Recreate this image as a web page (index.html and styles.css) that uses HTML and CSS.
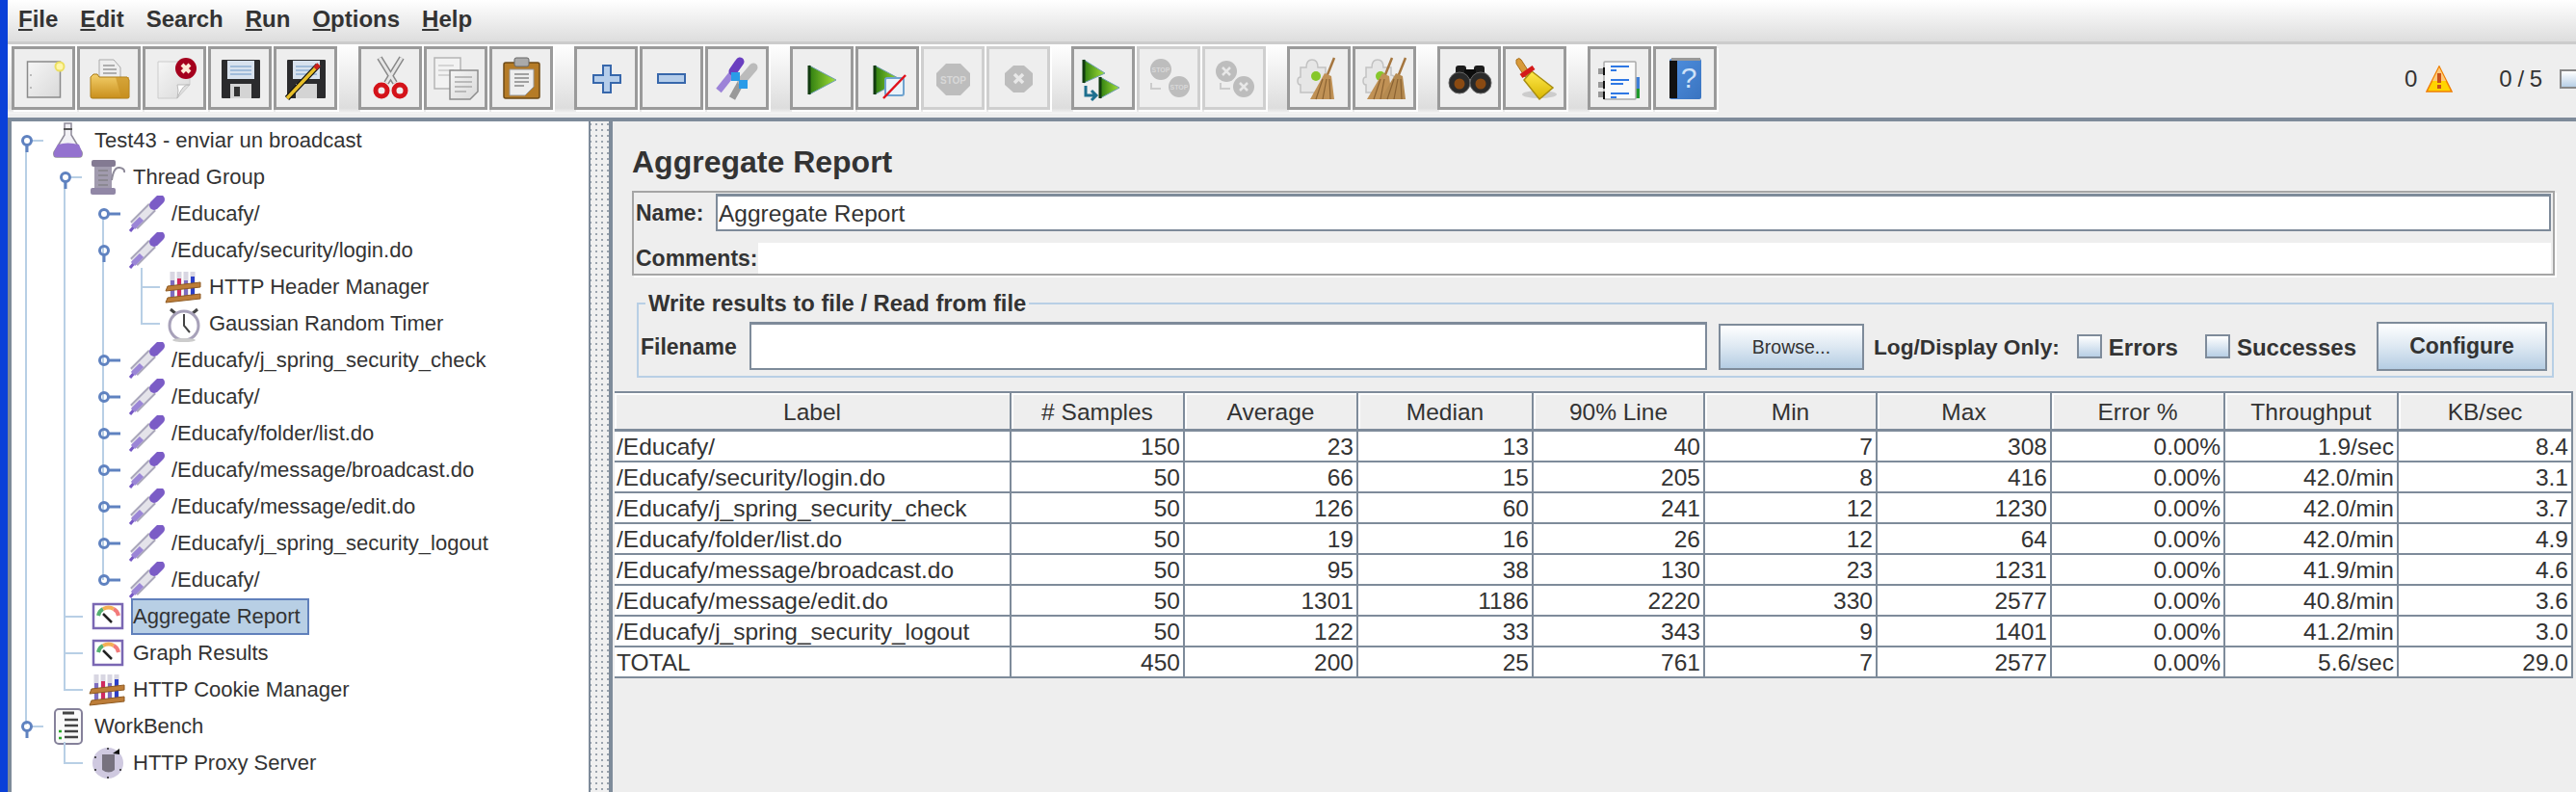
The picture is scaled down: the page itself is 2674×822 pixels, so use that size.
FILE: index.html
```html
<!DOCTYPE html>
<html lang="en">

<head>
    <meta charset="UTF-8">
    <title>Apache JMeter - Aggregate Report</title>
    <link rel="stylesheet" href="styles.css">
</head>

<body>
    <div class="window">
        <div class="menubar">
            <span><u>F</u>ile</span>
            <span><u>E</u>dit</span>
            <span>Search</span>
            <span><u>R</u>un</span>
            <span><u>O</u>ptions</span>
            <span><u>H</u>elp</span>
        </div>

        <div class="toolbar">
            <div class="tools">
                <div class="group">
                    <div class="btn"><svg class="bicon"><use href="#i-new" /></svg></div>
                    <div class="btn"><svg class="bicon"><use href="#i-open" /></svg></div>
                    <div class="btn"><svg class="bicon"><use href="#i-close" /></svg></div>
                    <div class="btn"><svg class="bicon"><use href="#i-save" /></svg></div>
                    <div class="btn"><svg class="bicon"><use href="#i-saveas" /></svg></div>
                </div>
                <div class="group">
                    <div class="btn"><svg class="bicon"><use href="#i-cut" /></svg></div>
                    <div class="btn"><svg class="bicon"><use href="#i-copy" /></svg></div>
                    <div class="btn"><svg class="bicon"><use href="#i-paste" /></svg></div>
                </div>
                <div class="group">
                    <div class="btn"><svg class="bicon"><use href="#i-plus" /></svg></div>
                    <div class="btn"><svg class="bicon"><use href="#i-minus" /></svg></div>
                    <div class="btn"><svg class="bicon"><use href="#i-toggle" /></svg></div>
                </div>
                <div class="group">
                    <div class="btn"><svg class="bicon"><use href="#i-play" /></svg></div>
                    <div class="btn"><svg class="bicon"><use href="#i-playnt" /></svg></div>
                    <div class="btn off">
                        <svg class="bicon" viewBox="3 3 60 60">
                            <path d="M26 18h15l10 10v13L41 51H26L16 41V28z" fill="#bdbdbd" />
                            <text x="33.5" y="39" class="stoptext">STOP</text>
                        </svg>
                    </div>
                    <div class="btn off"><svg class="bicon"><use href="#i-shut" /></svg></div>
                </div>
                <div class="group">
                    <div class="btn"><svg class="bicon"><use href="#i-rstart" /></svg></div>
                    <div class="btn off">
                        <svg class="bicon" viewBox="3 3 60 60">
                            <circle cx="25" cy="24" r="11" fill="#bdbdbd" />
                            <circle cx="44" cy="42" r="11" fill="#bdbdbd" />
                            <text x="25" y="27" class="stoptext small">STOP</text>
                            <text x="44" y="45" class="stoptext small">STOP</text>
                            <path d="M15 38v6h10" fill="none" stroke="#ccc" stroke-width="2" />
                        </svg>
                    </div>
                    <div class="btn off"><svg class="bicon"><use href="#i-rshut" /></svg></div>
                </div>
                <div class="group">
                    <div class="btn"><svg class="bicon"><use href="#i-clear" /></svg></div>
                    <div class="btn"><svg class="bicon"><use href="#i-clearall" /></svg></div>
                </div>
                <div class="group">
                    <div class="btn"><svg class="bicon"><use href="#i-search" /></svg></div>
                    <div class="btn"><svg class="bicon"><use href="#i-broom" /></svg></div>
                </div>
                <div class="group">
                    <div class="btn"><svg class="bicon"><use href="#i-log" /></svg></div>
                    <div class="btn">
                        <svg class="bicon" viewBox="3 3 60 60">
                            <rect x="17" y="13" width="33" height="42" rx="2" fill="url(#g-book)" />
                            <rect x="17" y="15" width="8" height="39" fill="#111" />
                            <rect x="19" y="12" width="30" height="3" fill="#999" />
                            <text x="37" y="43" class="helptext">?</text>
                        </svg>
                    </div>
                </div>
            </div>
            <div class="status">
                <span class="count">0</span>
                <svg class="warn" viewBox="0 0 28 28">
                    <path d="M14 1 27 27H1z" fill="#ffd400" stroke="#ef7d00" stroke-width="1.5" />
                    <path d="M14 2 21 16H7z" fill="#ffc97a" />
                    <rect x="12" y="8" width="4" height="10" fill="#c8501a" />
                    <rect x="12" y="20" width="4" height="4" fill="#c8501a" />
                </svg>
                <span class="threads">0 / 5</span>
                <span class="check runbox"></span>
            </div>
        </div>

        <div class="main">
            <div class="tree">
                <svg class="guides" viewBox="12 126 600 696">
                    <g class="guide">
                        <path d="M27 150V752M33 146H45M67 188V716H86M107 226V602M147 278V336H166M147 298H166M67 640H86M67 678H86M33 754H45M67 770V792H86M73 184H85" />
                    </g>
                    <g class="handle">
                        <circle cx="28" cy="146" r="4.5" /><path d="M28 151V158" />
                        <circle cx="68" cy="184" r="4.5" /><path d="M68 189V196" />
                        <circle cx="108" cy="222" r="4.5" /><path d="M113 222H125" />
                        <circle cx="108" cy="260" r="4.5" /><path d="M108 265V272" />
                        <circle cx="108" cy="374" r="4.5" /><path d="M113 374H125" />
                        <circle cx="108" cy="412" r="4.5" /><path d="M113 412H125" />
                        <circle cx="108" cy="450" r="4.5" /><path d="M113 450H125" />
                        <circle cx="108" cy="488" r="4.5" /><path d="M113 488H125" />
                        <circle cx="108" cy="526" r="4.5" /><path d="M113 526H125" />
                        <circle cx="108" cy="564" r="4.5" /><path d="M113 564H125" />
                        <circle cx="108" cy="602" r="4.5" /><path d="M113 602H125" />
                        <circle cx="28" cy="754" r="4.5" /><path d="M28 759V766" />
                    </g>
                </svg>
                <div class="row lv0"><svg class="ticon"><use href="#t-flask" /></svg><span class="name">Test43 - enviar un broadcast</span></div>
                <div class="row lv1"><svg class="ticon"><use href="#t-spool" /></svg><span class="name">Thread Group</span></div>
                <div class="row lv2"><svg class="ticon"><use href="#t-pipette" /></svg><span class="name">/Educafy/</span></div>
                <div class="row lv2"><svg class="ticon"><use href="#t-pipette" /></svg><span class="name">/Educafy/security/login.do</span></div>
                <div class="row lv3"><svg class="ticon"><use href="#t-rack" /></svg><span class="name">HTTP Header Manager</span></div>
                <div class="row lv3"><svg class="ticon"><use href="#t-timer" /></svg><span class="name">Gaussian Random Timer</span></div>
                <div class="row lv2"><svg class="ticon"><use href="#t-pipette" /></svg><span class="name">/Educafy/j_spring_security_check</span></div>
                <div class="row lv2"><svg class="ticon"><use href="#t-pipette" /></svg><span class="name">/Educafy/</span></div>
                <div class="row lv2"><svg class="ticon"><use href="#t-pipette" /></svg><span class="name">/Educafy/folder/list.do</span></div>
                <div class="row lv2"><svg class="ticon"><use href="#t-pipette" /></svg><span class="name">/Educafy/message/broadcast.do</span></div>
                <div class="row lv2"><svg class="ticon"><use href="#t-pipette" /></svg><span class="name">/Educafy/message/edit.do</span></div>
                <div class="row lv2"><svg class="ticon"><use href="#t-pipette" /></svg><span class="name">/Educafy/j_spring_security_logout</span></div>
                <div class="row lv2"><svg class="ticon"><use href="#t-pipette" /></svg><span class="name">/Educafy/</span></div>
                <div class="row lv1"><svg class="ticon"><use href="#t-gauge" /></svg><span class="name selected">Aggregate Report</span></div>
                <div class="row lv1"><svg class="ticon"><use href="#t-gauge" /></svg><span class="name">Graph Results</span></div>
                <div class="row lv1"><svg class="ticon"><use href="#t-rack" /></svg><span class="name">HTTP Cookie Manager</span></div>
                <div class="row lv0"><svg class="ticon"><use href="#t-clipboard" /></svg><span class="name">WorkBench</span></div>
                <div class="row lv1"><svg class="ticon"><use href="#t-proxy" /></svg><span class="name">HTTP Proxy Server</span></div>
            </div>

            <div class="splitter"></div>

            <div class="panel">
                <div class="title">Aggregate Report</div>

                <div class="namebox">
                    <div class="namerow">
                        <label class="namelabel">Name:</label>
                        <div class="field namefield">Aggregate Report</div>
                    </div>
                    <div class="commentrow">
                        <label>Comments:</label>
                        <div class="commentfield"></div>
                    </div>
                </div>

                <fieldset class="fileset">
                    <legend>Write results to file / Read from file</legend>
                    <div class="filerow">
                        <label class="filelabel">Filename</label>
                        <div class="field filefield"></div>
                        <div class="browse">Browse...</div>
                        <label class="loglabel">Log/Display Only:</label>
                        <span class="check errcheck"></span>
                        <label class="checklabel">Errors</label>
                        <span class="check succheck"></span>
                        <label class="checklabel">Successes</label>
                        <div class="configure">Configure</div>
                    </div>
                </fieldset>

                <table class="report">
                    <colgroup>
                        <col class="c-label"><col class="c180"><col class="c180"><col class="c182"><col class="c178">
                        <col class="c179"><col class="c181"><col class="c180"><col class="c180"><col class="c181">
                    </colgroup>
                    <thead>
                        <tr><th>Label</th><th># Samples</th><th>Average</th><th>Median</th><th>90% Line</th><th>Min</th><th>Max</th><th>Error %</th><th>Throughput</th><th>KB/sec</th></tr>
                    </thead>
                    <tbody>
                        <tr><td>/Educafy/</td><td>150</td><td>23</td><td>13</td><td>40</td><td>7</td><td>308</td><td>0.00%</td><td>1.9/sec</td><td>8.4</td></tr>
                        <tr><td>/Educafy/security/login.do</td><td>50</td><td>66</td><td>15</td><td>205</td><td>8</td><td>416</td><td>0.00%</td><td>42.0/min</td><td>3.1</td></tr>
                        <tr><td>/Educafy/j_spring_security_check</td><td>50</td><td>126</td><td>60</td><td>241</td><td>12</td><td>1230</td><td>0.00%</td><td>42.0/min</td><td>3.7</td></tr>
                        <tr><td>/Educafy/folder/list.do</td><td>50</td><td>19</td><td>16</td><td>26</td><td>12</td><td>64</td><td>0.00%</td><td>42.0/min</td><td>4.9</td></tr>
                        <tr><td>/Educafy/message/broadcast.do</td><td>50</td><td>95</td><td>38</td><td>130</td><td>23</td><td>1231</td><td>0.00%</td><td>41.9/min</td><td>4.6</td></tr>
                        <tr><td>/Educafy/message/edit.do</td><td>50</td><td>1301</td><td>1186</td><td>2220</td><td>330</td><td>2577</td><td>0.00%</td><td>40.8/min</td><td>3.6</td></tr>
                        <tr><td>/Educafy/j_spring_security_logout</td><td>50</td><td>122</td><td>33</td><td>343</td><td>9</td><td>1401</td><td>0.00%</td><td>41.2/min</td><td>3.0</td></tr>
                        <tr><td>TOTAL</td><td>450</td><td>200</td><td>25</td><td>761</td><td>7</td><td>2577</td><td>0.00%</td><td>5.6/sec</td><td>29.0</td></tr>
                    </tbody>
                </table>
            </div>
        </div>
    </div>

    <!-- icon sheet: toolbar icons use button coordinates, tree icons a 40x38 box -->
    <svg class="sheet">
        <defs>
            <linearGradient id="g-folder" x1="0" y1="0" x2="0" y2="1"><stop offset="0" stop-color="#f3cf6a" /><stop offset="1" stop-color="#c98f1c" /></linearGradient>
            <linearGradient id="g-green" x1="0" y1="0" x2="1" y2="0"><stop offset="0" stop-color="#2e7d10" /><stop offset="1" stop-color="#a6e23a" /></linearGradient>
            <linearGradient id="g-page" x1="0" y1="0" x2="1" y2="1"><stop offset="0" stop-color="#f6f6f6" /><stop offset="1" stop-color="#d9d9d9" /></linearGradient>
            <linearGradient id="g-broom" x1="0" y1="0" x2="0" y2="1"><stop offset="0" stop-color="#ffe94d" /><stop offset="1" stop-color="#d9b600" /></linearGradient>
            <linearGradient id="g-book" x1="0" y1="0" x2="1" y2="1"><stop offset="0" stop-color="#4f8fdf" /><stop offset="1" stop-color="#3a74c0" /></linearGradient>
        </defs>

        <symbol id="i-new" viewBox="3 3 60 60">
            <rect x="16.5" y="16" width="34" height="37" fill="url(#g-page)" stroke="#8a8a8a" stroke-width="1.5" />
            <circle cx="20" cy="30" r="1" fill="#aaa" /><circle cx="20" cy="43" r="1" fill="#aaa" />
            <circle cx="50" cy="21" r="4.5" fill="#fff6a8" stroke="#ecdf60" stroke-width="2" />
        </symbol>
        <symbol id="i-open" viewBox="3 3 60 60">
            <path d="M23 14h15l7 8v14H23z" fill="#eee" stroke="#aaa" />
            <path d="M27 20h12M27 24h14M27 28h14" stroke="#999" stroke-width="1.5" />
            <path d="M14 32l3-3 4 0 2 3h29l2 3v18q0 1-2 1H16q-2 0-2-2z" fill="url(#g-folder)" stroke="#a97a16" />
            <path d="M40 32h14v22H46z" fill="#c58d20" opacity=".6" />
        </symbol>
        <symbol id="i-close" viewBox="3 3 60 60">
            <path d="M16 16h33v24L36 54H16z" fill="url(#g-page)" stroke="#ccc" />
            <path d="M49 40q-7-2-13 14q2-9 0-14z" fill="#fff" stroke="#bbb" />
            <circle cx="45" cy="23" r="11" fill="#a5001d" />
            <path d="M41 19l8 8M49 19l-8 8" stroke="#ffe9d6" stroke-width="4" />
        </symbol>
        <symbol id="i-save" viewBox="3 3 60 60">
            <rect x="14" y="14" width="40" height="40" rx="1" fill="#2b2b2d" />
            <rect x="20" y="15" width="28" height="19" fill="#d8e2ee" />
            <path d="M23 21h22M23 25h22M23 29h22" stroke="#8fb0d3" stroke-width="1.5" />
            <rect x="23" y="39" width="22" height="15" fill="#d4d4d4" />
            <rect x="27" y="42" width="6" height="10" fill="#333" />
        </symbol>
        <symbol id="i-saveas" viewBox="3 3 60 60">
            <rect x="14" y="14" width="40" height="40" rx="1" fill="#2b2b2d" />
            <rect x="20" y="15" width="28" height="19" fill="#d8e2ee" />
            <path d="M23 21h22M23 25h22M23 29h22" stroke="#8fb0d3" stroke-width="1.5" />
            <rect x="23" y="39" width="22" height="15" fill="#d4d4d4" />
            <path d="M14 54 46 20" stroke="#111" stroke-width="6" />
            <path d="M14 54 46 20" stroke="#e8bf2a" stroke-width="3.5" />
            <path d="M43 23 47 19" stroke="#c9201c" stroke-width="5" />
        </symbol>
        <symbol id="i-cut" viewBox="3 3 60 60">
            <path d="M22 12 38 38M45 12 29 38" stroke="#888" stroke-width="6" />
            <path d="M22 12 38 38M45 12 29 38" stroke="#e6e6e6" stroke-width="3" />
            <circle cx="24" cy="46" r="6" fill="none" stroke="#d4131a" stroke-width="5" />
            <circle cx="43" cy="46" r="6" fill="none" stroke="#d4131a" stroke-width="5" />
        </symbol>
        <symbol id="i-copy" viewBox="3 3 60 60">
            <rect x="11" y="12" width="27" height="32" fill="#f2f2f2" stroke="#b5b5b5" stroke-width="1.5" />
            <path d="M15 20h16M15 25h16M15 30h16" stroke="#ccc" stroke-width="1.5" />
            <path d="M27 25h29v22l-8 8H27z" fill="url(#g-page)" stroke="#8c8c8c" stroke-width="1.5" />
            <path d="M32 32h18M32 37h18M32 42h18M32 47h12" stroke="#aaa" stroke-width="1.5" />
        </symbol>
        <symbol id="i-paste" viewBox="3 3 60 60">
            <rect x="15" y="17" width="37" height="37" rx="2" fill="#b57b26" stroke="#6d4a16" stroke-width="1.5" />
            <rect x="26" y="12" width="15" height="9" rx="2" fill="#aaa" stroke="#666" />
            <path d="M21 24h25v18l-9 9H21z" fill="#eee" stroke="#999" />
            <path d="M26 29h15M26 33h15M26 37h15M26 41h10" stroke="#888" stroke-width="1.5" />
        </symbol>
        <symbol id="i-plus" viewBox="3 3 60 60">
            <path d="M30 20h8v10h10v8H38v10h-8V38H20v-8h10z" fill="#b5cdea" stroke="#3767ab" stroke-width="2" />
        </symbol>
        <symbol id="i-minus" viewBox="3 3 60 60">
            <rect x="19" y="29" width="28" height="9" fill="#b5cdea" stroke="#3767ab" stroke-width="2" />
        </symbol>
        <symbol id="i-toggle" viewBox="3 3 60 60">
            <path d="M14 46 30 26" stroke="#9c83d8" stroke-width="7" />
            <path d="M29 26 36 16" stroke="#6a3fc0" stroke-width="9" stroke-linecap="round" />
            <path d="M28 54 38 36" stroke="#999" stroke-width="7" />
            <path d="M38 36 50 22" stroke="#bbb" stroke-width="9" stroke-linecap="round" />
            <path d="M27 32h9v9h-9zM35 40h9v9h-9z" fill="#2b9be8" transform="translate(0 -5)" />
        </symbol>
        <symbol id="i-play" viewBox="3 3 60 60">
            <path d="M20 20 48 35 20 50z" fill="url(#g-green)" stroke="#6f9fb0" />
            <path d="M20 20V50" stroke="#123b10" stroke-width="3" />
        </symbol>
        <symbol id="i-playnt" viewBox="3 3 60 60">
            <path d="M20 20 48 35 20 50z" fill="url(#g-green)" stroke="#6f9fb0" />
            <path d="M20 20V50" stroke="#123b10" stroke-width="3" />
            <rect x="31" y="33" width="19" height="18" rx="2" fill="#eaf3fa" stroke="#6fa3cf" stroke-width="2" />
            <path d="M29 54 52 30" stroke="#e0101a" stroke-width="2.5" />
        </symbol>
        <symbol id="i-shut" viewBox="3 3 60 60">
            <path d="M28 20h11l9 8v12l-9 8H28l-9-8V28z" fill="#bdbdbd" />
            <path d="M29 29l9 9M38 29l-9 9" stroke="#e8e8e8" stroke-width="3.5" />
        </symbol>
        <symbol id="i-rstart" viewBox="3 3 60 60">
            <path d="M13 14 35 28 13 38z" fill="url(#g-green)" stroke="#6f9fb0" />
            <path d="M13 14V38" stroke="#123b10" stroke-width="3" />
            <path d="M30 32 50 43 30 54z" fill="url(#g-green)" stroke="#6f9fb0" />
            <path d="M30 32V54" stroke="#123b10" stroke-width="3" />
            <path d="M15 41V51H25M21 46l5 5-5 5" fill="none" stroke="#1e6f8e" stroke-width="3" />
        </symbol>
        <symbol id="i-rshut" viewBox="3 3 60 60">
            <circle cx="25" cy="26" r="11" fill="#bdbdbd" />
            <circle cx="43" cy="42" r="11" fill="#bdbdbd" />
            <path d="M21 22l8 8M29 22l-8 8M39 38l8 8M47 38l-8 8" stroke="#e8e8e8" stroke-width="2.5" />
            <path d="M19 38v6h10" fill="none" stroke="#ccc" stroke-width="2" />
        </symbol>
        <symbol id="i-clear" viewBox="3 3 60 60">
            <path d="M14 22h6q0-8 6-8t6 8h8v8q4 0 4 6t-4 6v6H14v-8q-3 0-3-4t3-4z" fill="#e6e6e6" stroke="#c2c2c2" stroke-width="1.5" />
            <circle cx="30" cy="31" r="5" fill="#86c72a" />
            <path d="M49 12 41 32" stroke="#a5763f" stroke-width="2.5" />
            <path d="M39 28l7 3 3 24H24z" fill="#c09155" />
            <path d="M37 34l-7 21M41 34l-4 21M44 34l1 21" stroke="#8a6232" stroke-width="1.2" />
        </symbol>
        <symbol id="i-clearall" viewBox="3 3 60 60">
            <path d="M14 22h6q0-8 6-8t6 8h8v8q4 0 4 6t-4 6v6H14v-8q-3 0-3-4t3-4z" fill="#e6e6e6" stroke="#c2c2c2" stroke-width="1.5" />
            <circle cx="29" cy="31" r="5" fill="#86c72a" />
            <path d="M41 12 33 32M55 12 47 32" stroke="#a5763f" stroke-width="2.5" />
            <path d="M31 28l7 3 3 24H15z" fill="#c09155" />
            <path d="M45 28l7 3 3 24H29z" fill="#b58a50" />
            <path d="M29 34l-7 21M33 34l-4 21M43 34l-7 21M47 34l-4 21M50 34l1 21" stroke="#8a6232" stroke-width="1.2" />
        </symbol>
        <symbol id="i-search" viewBox="3 3 60 60">
            <rect x="19" y="20" width="11" height="16" rx="3" fill="#1c1c1c" />
            <rect x="38" y="20" width="11" height="16" rx="3" fill="#1c1c1c" />
            <rect x="28" y="24" width="12" height="10" fill="#0c0c0c" />
            <circle cx="23" cy="38" r="11" fill="#2a2a2a" stroke="#666" />
            <circle cx="45" cy="38" r="11" fill="#2a2a2a" stroke="#666" />
            <circle cx="23" cy="39" r="5.5" fill="#8a4a12" /><circle cx="45" cy="39" r="5.5" fill="#8a4a12" />
        </symbol>
        <symbol id="i-broom" viewBox="3 3 60 60">
            <ellipse cx="38" cy="50" rx="18" ry="4" fill="#ccc" />
            <path d="M14 14q3-3 5 0l9 14-5 4-9-14z" fill="#d89a3a" stroke="#a86e1a" />
            <path d="M30 26 52 43 38 55 22 35z" fill="url(#g-broom)" stroke="#a98e10" stroke-width="1.5" />
            <path d="M19 31 32 22" stroke="#d41a1a" stroke-width="5" />
        </symbol>
        <symbol id="i-log" viewBox="3 3 60 60">
            <rect x="48" y="32" width="6" height="12" fill="#3f7fd8" /><rect x="48" y="44" width="6" height="10" fill="#1f9a2a" />
            <rect x="17" y="16" width="33" height="39" rx="1" fill="#fafafa" stroke="#aaa" stroke-width="1.5" />
            <path d="M11 24h7v6h-7zM11 38h7v6h-7zM11 48h7v6h-7z" fill="#999" transform="translate(0 -1)" />
            <path d="M17 22v8M17 36v8M17 47v8" stroke="#111" stroke-width="2" />
            <path d="M24 23h19M24 27h6M24 37h19M24 41h13M24 51h19M24 55h6" stroke="#2f78e4" stroke-width="2" transform="translate(0 -2)" />
        </symbol>

        <symbol id="t-flask" viewBox="0 0 40 38">
            <path d="M15 1h7v12l11 18q1 5-3 5H7q-4 0-3-5l11-18z" fill="#f2f1f6" stroke="#8e8a99" stroke-width="1.5" />
            <path d="M8 23q10-3 22 0l3 8q1 5-3 5H7q-4 0-3-5z" fill="#9472cf" />
            <path d="M14 7h9" stroke="#555" stroke-width="2" />
        </symbol>
        <symbol id="t-spool" viewBox="0 0 40 38">
            <rect x="6" y="8" width="18" height="22" fill="#a19bae" />
            <path d="M10 12h10M10 17h10M10 22h10M10 27h10" stroke="#777" />
            <rect x="3" y="1" width="25" height="7" rx="2" fill="#837a92" />
            <rect x="2" y="30" width="26" height="7" rx="2" fill="#9187a6" />
            <path d="M24 22q2-14 8-13t5 5" fill="none" stroke="#8e8a99" stroke-width="2" />
        </symbol>
        <symbol id="t-pipette" viewBox="0 0 40 38">
            <path d="M3 37 14 24" stroke="#7557c4" stroke-width="3" />
            <path d="M7 31 26 12" stroke="#a9a6ba" stroke-width="11" />
            <path d="M7 31 26 12" stroke="#e4e3ea" stroke-width="7" />
            <path d="M6 33 15 24" stroke="#9b86d6" stroke-width="6" />
            <path d="M28 10 34 4" stroke="#7b5cc6" stroke-width="10" stroke-linecap="round" />
        </symbol>
        <symbol id="t-rack" viewBox="0 0 40 38">
            <path d="M8 3V29M15 3V29M22 3V29M29 3V29" stroke="#d8d6e2" stroke-width="5" />
            <path d="M8 12V29" stroke="#7d6cc0" stroke-width="4" />
            <path d="M15 10V29" stroke="#d02a60" stroke-width="4" />
            <path d="M22 12V29" stroke="#7d6cc0" stroke-width="4" />
            <path d="M29 8V29" stroke="#2c3fc8" stroke-width="4" />
            <path d="M3 18 37 14v5L1 23zM3 30 37 26v5L1 35z" fill="#bd7d38" stroke="#8e5a22" />
        </symbol>
        <symbol id="t-timer" viewBox="0 0 40 38">
            <path d="M6 4 12 9M34 4 28 9" stroke="#444" stroke-width="3" />
            <circle cx="20" cy="21" r="15" fill="#fff" stroke="#a7a1b9" stroke-width="3" />
            <path d="M20 9V21L26 28" fill="none" stroke="#444" stroke-width="2" />
            <ellipse cx="20" cy="36" rx="12" ry="2" fill="#ccc" />
        </symbol>
        <symbol id="t-gauge" viewBox="0 0 40 38">
            <rect x="5" y="6" width="30" height="25" fill="#fff" stroke="#7a67b3" stroke-width="2.5" />
            <path d="M10 18q1-5 5-7" fill="none" stroke="#55b070" stroke-width="4" />
            <path d="M15 11q6-3 11 0" fill="none" stroke="#f5b055" stroke-width="4" />
            <path d="M26 11q4 2 5 7" fill="none" stroke="#f27a7a" stroke-width="4" />
            <path d="M15 16 24 25" stroke="#222" stroke-width="2.5" />
        </symbol>
        <symbol id="t-clipboard" viewBox="0 0 40 38">
            <rect x="5" y="1" width="28" height="36" rx="4" fill="#fafafa" stroke="#85819a" stroke-width="2" />
            <path d="M13 5h12" stroke="#444" stroke-width="3" />
            <path d="M15 12h14M15 18h14M15 24h14M15 30h14" stroke="#444" stroke-width="2.5" />
            <path d="M9 24h3M9 31h3" stroke="#27a827" stroke-width="2.5" />
        </symbol>
        <symbol id="t-proxy" viewBox="0 0 40 38">
            <circle cx="20" cy="19" r="16" fill="#cfc9e0" />
            <path d="M14 10h13v16q-6 5-13 0z" fill="#77727f" />
            <path d="M25 9 32 4v6z" fill="#111" />
            <circle cx="20" cy="4" r="1" fill="#222" /><circle cx="7" cy="13" r="1" fill="#222" /><circle cx="7" cy="26" r="1" fill="#222" /><circle cx="20" cy="34" r="1" fill="#222" /><circle cx="33" cy="26" r="1" fill="#222" />
        </symbol>
    </svg>
</body>

</html>
```

FILE: styles.css
```css
* {
    box-sizing: border-box;
}

body {
    margin: 0;
    font-family: "Liberation Sans", Arial, sans-serif;
    color: #333;
    overflow: hidden;
}

.window {
    display: flex;
    flex-direction: column;
    height: 822px;
    border-left: 8px solid #0a40d8;
    background-color: #eee;
}

.sheet {
    display: block;
    width: 0;
    height: 0;
}

.menubar {
    display: flex;
    gap: 23px;
    align-items: center;
    height: 46px;
    padding: 0 0 3px 11px;
    font-size: 24px;
    font-weight: bold;
    background: linear-gradient(#fff, #ddd);
    border-bottom: 3px solid #ccc;
}

.toolbar {
    display: flex;
    height: 76px;
    flex-shrink: 0;
}

.tools {
    display: flex;
    gap: 22px;
    width: 1780px;
    height: 72px;
    padding: 2px 0 0 4px;
    background: linear-gradient(#fff, #ddd 92%, #f6f6f6);
}

.group {
    display: flex;
    gap: 2px;
}

.btn {
    width: 66px;
    height: 66px;
    border: 3px solid #9a9a9a;
    background-color: #eee;
    box-shadow: 2px 2px 0 #fff;
}

.btn.off {
    border-color: #cfcfcf;
}

.bicon {
    display: block;
    width: 60px;
    height: 60px;
}

.stoptext {
    font-family: "Liberation Sans", sans-serif;
    font-size: 10px;
    font-weight: bold;
    fill: #d8d8d8;
    text-anchor: middle;
}

.stoptext.small {
    font-size: 7px;
}

.helptext {
    font-family: "Liberation Sans", sans-serif;
    font-size: 30px;
    fill: #cfe2f8;
    text-anchor: middle;
}

.status {
    display: flex;
    align-items: center;
    height: 70px;
    padding-top: 2px;
    margin-left: 714px;
    font-size: 24px;
    white-space: nowrap;
}

.warn {
    width: 28px;
    height: 28px;
    margin-left: 9px;
}

.threads {
    width: 66px;
    margin-left: 48px;
    word-spacing: -1px;
}

.check {
    display: block;
    flex-shrink: 0;
    width: 26px;
    height: 25px;
    border: 2px solid #7e8b9a;
    background: linear-gradient(#fff, #b8cfe5);
}

.runbox {
    width: 20px;
    height: 20px;
    margin-left: -3px;
    border-color: #888;
}

.main {
    display: flex;
    flex: 1;
    min-height: 0;
    border-top: 4px solid #7e8b9a;
}

.tree {
    position: relative;
    width: 605px;
    border-left: 4px solid #7e8b9a;
    border-right: 2px solid #7e8b9a;
    background-color: #fff;
    font-size: 22px;
    white-space: nowrap;
}

.guides {
    position: absolute;
    top: 0;
    left: 0;
    width: 600px;
    height: 696px;
    fill: none;
}

.guide {
    stroke: #b8cfe5;
    stroke-width: 2;
}

.handle {
    stroke: #5f82c0;
    stroke-width: 3;
}

.row {
    display: flex;
    align-items: center;
    height: 38px;
}

.row:first-of-type {
    margin-top: 1px;
}

.lv0 {
    padding-left: 40px;
}

.lv1 {
    padding-left: 80px;
}

.lv2 {
    padding-left: 120px;
}

.lv3 {
    padding-left: 159px;
}

.ticon {
    flex-shrink: 0;
    width: 40px;
    height: 38px;
}

.name {
    height: 38px;
    margin-left: 4px;
    padding-right: 7px;
    border: 2px solid transparent;
    line-height: 34px;
}

.selected {
    border-color: #6080bb;
    background-color: #b8cfe5;
}

.splitter {
    width: 19px;
    background-color: #f0f0f0;
    background-image: radial-gradient(#9aa3ad 1px, transparent 1.3px);
    background-size: 6px 6px;
    background-position: 3px 0;
}

.panel {
    flex: 1;
    min-width: 0;
    padding-left: 20px;
    border-left: 4px solid #7e8b9a;
}

.title {
    height: 72px;
    padding-top: 22px;
    font-size: 32px;
    font-weight: bold;
    line-height: 40px;
}

.namebox {
    height: 88px;
    margin-right: 22px;
    padding: 1px 2px 0;
    border: 2px solid #a5a5a5;
    box-shadow: 2px 2px 0 #fff;
    font-size: 23px;
    font-weight: bold;
}

.namerow {
    display: flex;
    align-items: center;
    height: 39px;
}

.namelabel {
    width: 83px;
    padding-top: 2px;
}

.field {
    flex: 1;
    height: 100%;
    border: 2px solid #7e8b9a;
    border-top-width: 3px;
    background-color: #fff;
    font-weight: normal;
}

.namefield {
    padding-left: 1px;
    font-size: 24.5px;
    line-height: 36px;
}

.commentrow {
    display: flex;
    align-items: center;
    height: 32px;
    margin-top: 12px;
}

.commentfield {
    flex: 1;
    height: 100%;
    background-color: #fff;
}

.fileset {
    margin: 13px 23px 0 5px;
    padding: 3px 5px 5px 2px;
    border: 2px solid #b8cfe5;
    min-width: 0;
}

.fileset legend {
    margin-left: 5px;
    padding: 0 3px;
    font-size: 23.8px;
    font-weight: bold;
    line-height: 32px;
}

.filerow {
    display: flex;
    align-items: center;
    height: 51px;
    font-size: 22.7px;
    font-weight: bold;
    white-space: nowrap;
}

.filerow label {
    padding-top: 2px;
}

.filelabel {
    width: 113px;
    font-size: 23px;
}

.filefield {
    flex: 1;
    height: 50px;
    margin-top: -1px;
}

.browse {
    width: 151px;
    height: 48px;
    margin-left: 12px;
    border: 2px solid #7e8b9a;
    background: linear-gradient(#fff, #dde8f2 50%, #b5cde3);
    font-size: 19.5px;
    font-weight: normal;
    line-height: 45px;
    text-align: center;
}

.loglabel {
    margin-left: 10px;
}

.errcheck {
    margin-left: 18px;
}

.succheck {
    margin-left: 28px;
}

.checklabel {
    margin-left: 7px;
    font-size: 24px;
}

.configure {
    width: 177px;
    height: 51px;
    margin-left: 21px;
    border: 2px solid #7e8b9a;
    background: linear-gradient(#fff, #dde8f2 50%, #b5cde3);
    font-size: 23px;
    line-height: 47px;
    text-align: center;
}

.report {
    width: 2033px;
    margin: 14px 0 0 -18px;
    border-collapse: separate;
    border-spacing: 0;
    table-layout: fixed;
    font-size: 24.5px;
}

.c-label {
    width: 412px;
}

.c178 {
    width: 178px;
}

.c179 {
    width: 179px;
}

.c180 {
    width: 180px;
}

.c181 {
    width: 181px;
}

.c182 {
    width: 182px;
}

.report th {
    height: 42px;
    padding: 2px 0 0;
    border-top: 2px solid #7e8b9a;
    border-right: 2px solid #7e8b9a;
    border-bottom: 3px solid #7e8b9a;
    background-color: #eee;
    box-shadow: inset 2px 2px 0 #fff;
    font-weight: normal;
}

.report td {
    height: 32px;
    padding: 1px 3px 0 2px;
    border-right: 2px solid #7e8b9a;
    border-bottom: 2px solid #7e8b9a;
    background-color: #fff;
    line-height: 28px;
    text-align: right;
    white-space: nowrap;
}

.report td:first-child {
    text-align: left;
}
```
